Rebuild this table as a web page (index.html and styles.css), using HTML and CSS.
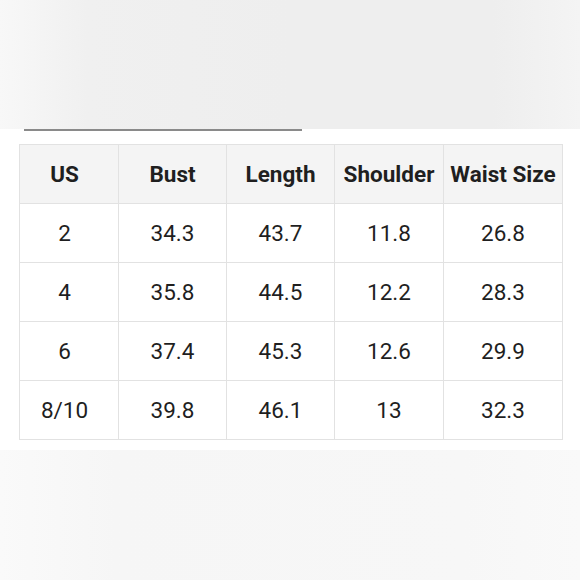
FILE: index.html
```
<!DOCTYPE html>
<html>
<head>
<meta charset="utf-8">
<link rel="stylesheet" href="styles.css">
</head>
<body>
<div class="top"></div>
<div class="rule"></div>
<div class="sheet">
  <table class="size-table">
    <colgroup>
      <col class="c1"><col class="c2"><col class="c3"><col class="c4"><col class="c5">
    </colgroup>
    <thead>
      <tr><th>US</th><th>Bust</th><th>Length</th><th>Shoulder</th><th>Waist Size</th></tr>
    </thead>
    <tbody>
      <tr><td>2</td><td>34.3</td><td>43.7</td><td>11.8</td><td>26.8</td></tr>
      <tr><td>4</td><td>35.8</td><td>44.5</td><td>12.2</td><td>28.3</td></tr>
      <tr><td>6</td><td>37.4</td><td>45.3</td><td>12.6</td><td>29.9</td></tr>
      <tr><td>8/10</td><td>39.8</td><td>46.1</td><td>13</td><td>32.3</td></tr>
    </tbody>
  </table>
</div>
<div class="bottom"></div>
</body>
</html>
```
FILE: styles.css
```
html, body {
  margin: 0;
  padding: 0;
  width: 580px;
  height: 580px;
  overflow: hidden;
  background: #ffffff;
  font-family: Roboto, "Liberation Sans", sans-serif;
}

.top {
  height: 129px;
  background: linear-gradient(90deg, #f8f8f8 0%, #f0f0f0 15%, #eeeeee 50%, #eeeeee 85%, #f4f4f4 100%);
}

.rule {
  margin-left: 24px;
  width: 278px;
  height: 2px;
  background: #8a8a8a;
}

.sheet {
  height: 319px;
  padding: 13px 0 0 19px;
  box-sizing: border-box;
  background: #ffffff;
}

.size-table {
  width: 543px;
  table-layout: fixed;
  border-collapse: collapse;
  color: #1f1f1f;
  font-size: 22.5px;
}

.c1 { width: 99px; }
.c2 { width: 108px; }
.c3 { width: 108px; }
.c4 { width: 109px; }
.c5 { width: 119px; }

.size-table th,
.size-table td {
  border: 1px solid #e2e2e2;
  height: 58px;
  padding: 0;
  text-align: center;
  vertical-align: middle;
  white-space: nowrap;
}

.size-table th:first-child,
.size-table td:first-child {
  padding-right: 9px;
}

.size-table th {
  background: #f4f4f4;
  font-weight: 700;
}

.size-table td {
  font-weight: 400;
}

.bottom {
  height: 130px;
  background: linear-gradient(90deg, #fafafa 0%, #f6f6f6 20%, #f7f7f7 80%, #f9f9f9 100%);
}
```
